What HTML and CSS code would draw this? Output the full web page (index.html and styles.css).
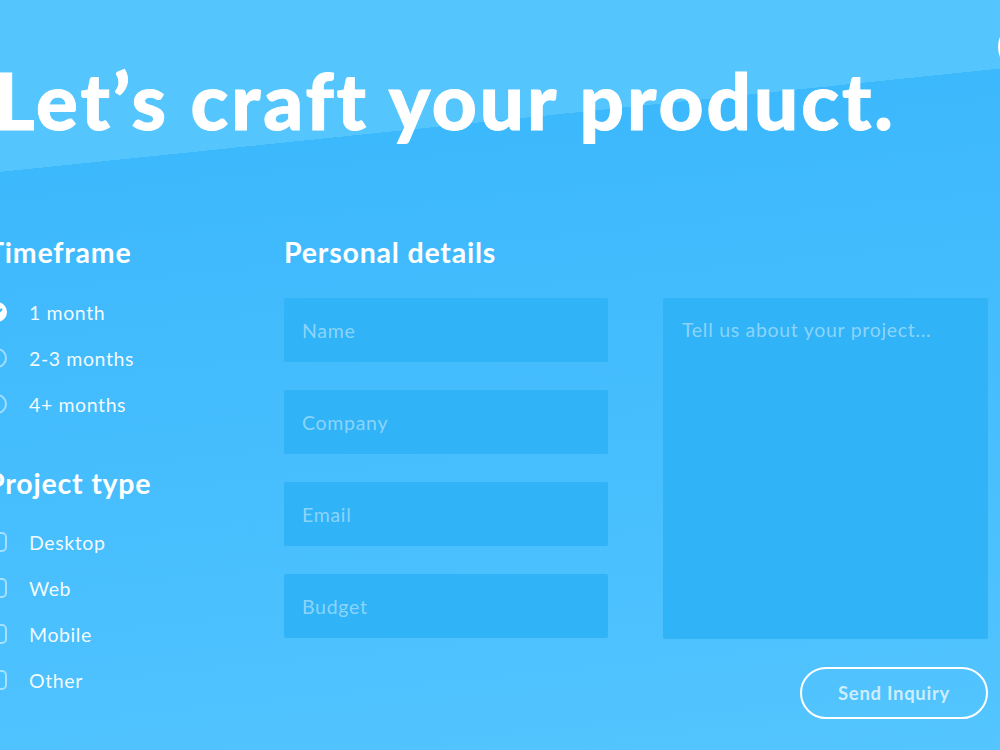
FILE: index.html
```html
<!DOCTYPE html>
<html lang="en">
<head>
<meta charset="utf-8">
<title>Start a project</title>
<link rel="stylesheet" href="styles.css">
</head>
<body>
<div class="page">
  <button class="menu-ring" type="button" aria-label="Menu"></button>
  <h1 class="headline">Let’s craft your product.</h1>

  <form class="inquiry">
    <div class="options">
      <section class="group">
        <h2 class="group-title">Timeframe</h2>
        <ul class="choices">
          <li class="choice">
            <span class="radio is-checked">
              <svg viewBox="0 0 20 20" width="20" height="20"><path d="M6 10.4l2.8 2.8L14.2 7.6" fill="none" stroke="#44bcfd" stroke-width="2.4" stroke-linecap="round" stroke-linejoin="round"/></svg>
            </span>
            1 month
          </li>
          <li class="choice"><span class="radio"></span>2-3 months</li>
          <li class="choice"><span class="radio"></span>4+ months</li>
        </ul>
      </section>

      <section class="group group-types">
        <h2 class="group-title">Project type</h2>
        <ul class="choices">
          <li class="choice"><span class="box"></span>Desktop</li>
          <li class="choice"><span class="box"></span>Web</li>
          <li class="choice"><span class="box"></span>Mobile</li>
          <li class="choice"><span class="box"></span>Other</li>
        </ul>
      </section>
    </div>

    <div class="details">
      <h2 class="group-title">Personal details</h2>
      <div class="fields">
        <div class="field-stack">
          <input class="field" type="text" placeholder="Name">
          <input class="field" type="text" placeholder="Company">
          <input class="field" type="email" placeholder="Email">
          <input class="field" type="text" placeholder="Budget">
        </div>
        <textarea class="field message" placeholder="Tell us about your project..."></textarea>
      </div>
      <div class="actions">
        <button class="send" type="button">Send Inquiry</button>
      </div>
    </div>
  </form>
</div>
</body>
</html>
```

FILE: styles.css
```css
* {
  box-sizing: border-box;
}

html,
body {
  margin: 0;
  height: 100%;
}

body {
  overflow: hidden;
  font-family: "Lato", "Open Sans", sans-serif;
  color: #fff;
  background:
    linear-gradient(174.1deg,
      #55c5fe 0,
      #55c5fe 171px,
      #3cb8fc 171px,
      #43bcfd 45%,
      #4cc1fe 80%,
      #54c5fe 100%);
}

.page {
  position: relative;
  height: 100%;
  margin-left: -13px;
  padding-top: 62px;
  padding-right: 12px;
}

/* round control peeking in at the top right corner */
.menu-ring {
  position: absolute;
  top: 21px;
  left: 1011px;
  width: 52px;
  height: 52px;
  padding: 0;
  border: 3px solid #fff;
  border-radius: 50%;
  background: transparent;
}

.headline {
  margin: 0 0 0 7px;
  font-size: 78px;
  line-height: 76px;
  font-weight: 900;
  letter-spacing: 3px;
  white-space: nowrap;
  -webkit-text-stroke: 1px #fff;
}

.inquiry {
  display: grid;
  grid-template-columns: 297px 1fr;
  margin-top: 98px;
}

.group-title {
  margin: 0;
  font-size: 28.5px;
  line-height: 32px;
  font-weight: 700;
  letter-spacing: 0.8px;
  white-space: nowrap;
}

.choices {
  list-style: none;
  margin: 21px 0 0;
  padding: 0;
}

.group-types {
  margin-top: 40px;
}

.group-types .choices {
  margin-top: 20px;
}

.choice {
  display: flex;
  align-items: center;
  gap: 22px;
  height: 46px;
  font-size: 19.5px;
  letter-spacing: 0.6px;
  color: rgba(255, 255, 255, 0.94);
}

.radio,
.box {
  flex: none;
  width: 20px;
  height: 20px;
  border: 2px solid rgba(255, 255, 255, 0.5);
}

.radio {
  border-radius: 50%;
}

.radio.is-checked {
  display: flex;
  border: 0;
  background: #fff;
}

.box {
  border-radius: 5px;
}

.details {
  display: flex;
  flex-direction: column;
}

.fields {
  display: grid;
  grid-template-columns: 324px 325px;
  gap: 55px;
  margin-top: 30px;
}

.field-stack {
  display: flex;
  flex-direction: column;
  gap: 28px;
}

.field {
  display: block;
  width: 100%;
  height: 64px;
  margin: 0;
  padding: 0 18px;
  border: 0;
  border-radius: 2px;
  background: #30b3f7;
  font-family: inherit;
  font-size: 19.5px;
  letter-spacing: 0.7px;
  color: #fff;
  outline: none;
}

.field::placeholder {
  color: rgba(255, 255, 255, 0.45);
}

.message {
  height: 341px;
  padding: 20px 19px;
  line-height: 24px;
  resize: none;
}

.actions {
  display: flex;
  justify-content: flex-end;
  margin-top: 28px;
}

.send {
  width: 188px;
  height: 52px;
  padding: 0;
  border: 2px solid #fff;
  border-radius: 26px;
  background: transparent;
  font-family: inherit;
  font-size: 18.5px;
  font-weight: 700;
  letter-spacing: 0.7px;
  color: rgba(255, 255, 255, 0.72);
}
```
